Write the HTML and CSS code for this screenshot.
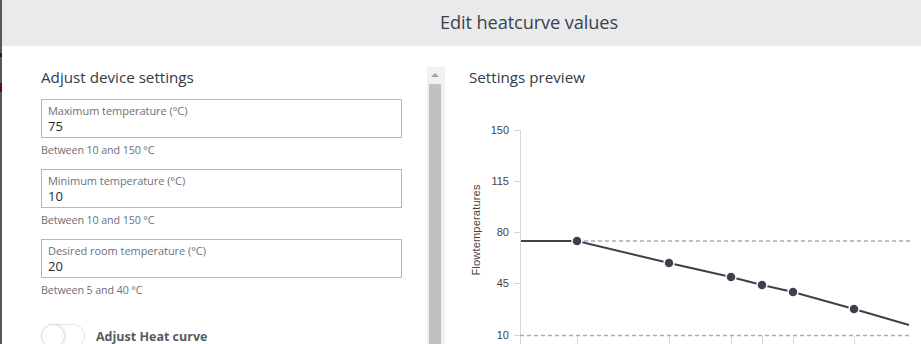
FILE: index.html
```html
<!DOCTYPE html>
<html>
<head>
<meta charset="utf-8">
<link rel="stylesheet" href="styles.css">
</head>
<body>
<div class="page">
  <div class="backdrop-edge"><span class="edge-mark1"></span><span class="edge-mark2"></span></div>
  <div class="modal">
    <div class="modal-header"><h1 class="modal-title">Edit heatcurve values</h1></div>
    <div class="modal-body">
      <div class="left-pane">
        <div class="form">
          <h2 class="section-title">Adjust device settings</h2>
          <div class="field">
            <div class="field-box">
              <div class="field-label">Maximum temperature (°C)</div>
              <div class="field-value">75</div>
            </div>
            <div class="field-help">Between 10 and 150 °C</div>
          </div>
          <div class="field">
            <div class="field-box">
              <div class="field-label">Minimum temperature (°C)</div>
              <div class="field-value">10</div>
            </div>
            <div class="field-help">Between 10 and 150 °C</div>
          </div>
          <div class="field">
            <div class="field-box">
              <div class="field-label">Desired room temperature (°C)</div>
              <div class="field-value">20</div>
            </div>
            <div class="field-help">Between 5 and 40 °C</div>
          </div>
          <div class="toggle-row">
            <div class="toggle"><div class="toggle-knob"></div></div>
            <span class="toggle-label">Adjust Heat curve</span>
          </div>
        </div>
        <div class="scrollbar">
          <div class="scroll-arrow"></div>
          <div class="scroll-thumb"></div>
        </div>
      </div>
      <div class="right-pane">
        <h2 class="section-title">Settings preview</h2>
        <svg class="chart" width="452" height="257" viewBox="0 0 452 257">
          <g class="grid" stroke="#d6d6d6" stroke-width="1">
            <line x1="51.5" y1="43" x2="51.5" y2="257"/>
            <line x1="45" y1="43.5" x2="51" y2="43.5"/>
            <line x1="45" y1="94.5" x2="51" y2="94.5"/>
            <line x1="45" y1="145.5" x2="51" y2="145.5"/>
            <line x1="45" y1="196.5" x2="51" y2="196.5"/>
            <line x1="45" y1="248.5" x2="51" y2="248.5"/>
            <line x1="108.5" y1="249" x2="108.5" y2="257"/>
            <line x1="200.5" y1="249" x2="200.5" y2="257"/>
            <line x1="262.5" y1="249" x2="262.5" y2="257"/>
            <line x1="293.5" y1="249" x2="293.5" y2="257"/>
            <line x1="324.5" y1="249" x2="324.5" y2="257"/>
            <line x1="385.5" y1="249" x2="385.5" y2="257"/>
          </g>
          <g class="ticks" font-family="Liberation Sans, Arial, sans-serif" font-size="11" fill="#444" text-anchor="end">
            <text x="40" y="47">150</text>
            <text x="40" y="98">115</text>
            <text x="40" y="149">80</text>
            <text x="40" y="200">45</text>
            <text x="40" y="252">10</text>
          </g>
          <text x="0" y="0" transform="translate(11 143) rotate(-90)" font-family="Liberation Sans, Arial, sans-serif" font-size="11" fill="#444" text-anchor="middle" letter-spacing="0.2">Flowtemperatures</text>
          <g stroke="#adadad" stroke-width="1.3" stroke-dasharray="4 3" fill="none">
            <line x1="108" y1="154" x2="441" y2="154"/>
            <line x1="51" y1="248.5" x2="441" y2="248.5"/>
          </g>
          <polyline points="52,154 108,154 200,176 262,190 293,198 324,205 385,222 440,238" fill="none" stroke="#3b424e" stroke-width="2"/>
          <g fill="#3b424e" stroke="#fff" stroke-width="1.5">
            <circle cx="108" cy="154" r="5"/>
            <circle cx="200" cy="176" r="5"/>
            <circle cx="262" cy="190" r="5"/>
            <circle cx="293" cy="198" r="5"/>
            <circle cx="324" cy="205" r="5"/>
            <circle cx="385" cy="222" r="5"/>
          </g>
        </svg>
      </div>
    </div>
  </div>
</div>
</body>
</html>
```

FILE: styles.css
```css
* { box-sizing: border-box; }
html, body { margin: 0; padding: 0; overflow: hidden; background: #fff; }
body { font-family: "Open Sans", "Noto Sans", sans-serif; color: #3a414c; }

.page { display: flex; width: 921px; height: 344px; overflow: hidden; }

.backdrop-edge { flex: 0 0 2px; background: #585858; position: relative; }
.edge-mark1 { position: absolute; left: 0; top: 53px; width: 2px; height: 4px; background: #222; }
.edge-mark2 { position: absolute; left: 0; top: 83px; width: 2px; height: 9px; background: #5a1010; }

.modal { flex: 0 0 1054px; display: flex; flex-direction: column; min-height: 0; }

.modal-header {
  flex: 0 0 46px;
  height: 46px;
  background: #e9eaeb;
  display: flex;
  align-items: center;
  justify-content: center;
}
.modal-title {
  margin: 0;
  font-size: 18.2px;
  font-weight: 400;
  color: #3b424d;
  padding-bottom: 3px;
  letter-spacing: -0.1px;
}

.modal-body { display: flex; flex: 0 0 auto; }

.left-pane { display: flex; width: 443px; }
.form { width: 361px; margin-left: 39px; padding-top: 21px; }

.section-title {
  margin: 0;
  font-size: 15.2px;
  line-height: 20px;
  font-weight: 400;
  color: #333a45;
}
.form .section-title { margin-bottom: 12px; }

.field { margin-bottom: 12px; }
.field-box {
  border: 1px solid #b3b7bd;
  height: 39px;
  padding: 4px 6px 0;
}
.field-label { font-size: 11px; line-height: 14px; color: #6b7079; letter-spacing: -0.05px; }
.field-value { font-size: 13px; line-height: 16px; color: #262b33; }
.field-help {
  margin-top: 5px;
  font-size: 10.7px;
  line-height: 14px;
  color: #6d7077;
  letter-spacing: -0.1px;
}

.toggle-row { display: flex; align-items: center; margin-top: 27px; }
.toggle {
  flex: 0 0 44px;
  width: 44px;
  height: 24px;
  border: 1px solid #e2e3e5;
  border-radius: 12px;
  background: #fff;
  position: relative;
}
.toggle-knob {
  position: absolute;
  left: -1px;
  top: -1px;
  width: 24px;
  height: 24px;
  border-radius: 50%;
  border: 1px solid #dcdde0;
  background: #fff;
  box-shadow: 1px 0 2px rgba(0,0,0,0.08);
}
.toggle-label {
  margin-left: 11px;
  font-size: 12.5px;
  font-weight: 700;
  color: #555c66;
}

.scrollbar {
  margin-left: 25px;
  margin-top: 21px;
  width: 18px;
  height: 300px;
  background: #f1f1f1;
  padding: 0 4px 0 2px;
  flex: 0 0 18px;
}
.scroll-arrow {
  height: 17px;
  position: relative;
}
.scroll-arrow::before {
  content: "";
  position: absolute;
  left: 2px;
  top: 6px;
  border-left: 4px solid transparent;
  border-right: 4px solid transparent;
  border-bottom: 4px solid #a3a3a3;
}
.scroll-thumb { height: 280px; background: #c1c1c1; }

.right-pane { padding-left: 24px; padding-top: 21px; }
.chart { display: block; }
```
